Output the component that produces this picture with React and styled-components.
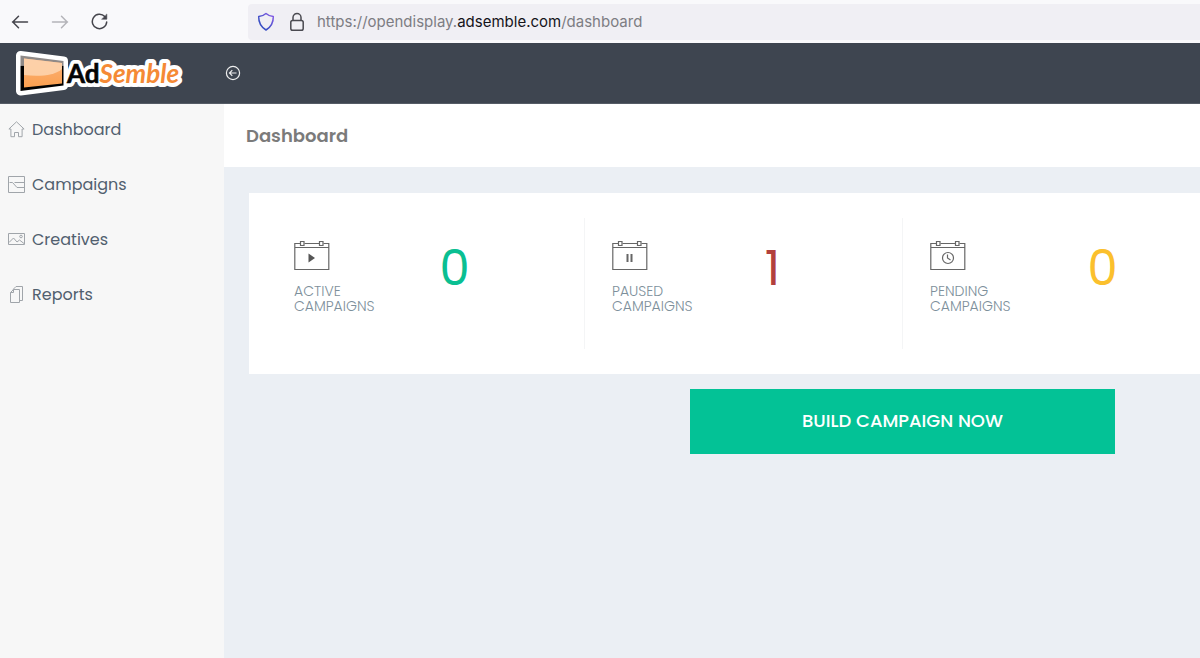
import styled, { createGlobalStyle } from "styled-components";

const navItems = [
    { name: "Dashboard", icon: <HomeIcon /> },
    { name: "Campaigns", icon: <CampaignIcon /> },
    { name: "Creatives", icon: <PictureIcon /> },
    { name: "Reports", icon: <PagesIcon /> },
]

const stats = [
    { status: "Active", count: 0, color: "#0abf92", mark: <path d="M14.5 13.5v9l6.5-4.5z" fill="#555" stroke="none" /> },
    { status: "Paused", count: 1, color: "#b2403d", mark: <path d="M15.5 14v8M19.5 14v8" strokeWidth="2" /> },
    {
        status: "Pending",
        count: 0,
        color: "#fbc02d",
        wide: true,
        mark: (
            <>
                <circle cx="18" cy="18" r="5.5" />
                <path d="M17.5 14.5V18l3 2" />
            </>
        ),
    },
]

const App = () => {
    return (
        <Page>
            <GlobalStyle />
            <Browser />
            <Header>
                <LogoLink href="/" aria-label="AdSemble">
                    <Logo />
                </LogoLink>
                <CollapseButton aria-label="Collapse menu">
                    <svg width="16" height="16" viewBox="0 0 16 16" fill="none" stroke="currentColor" strokeWidth="1.2">
                        <circle cx="8" cy="8" r="6.6" />
                        <path d="M11.5 8h-7M7.3 5.2L4.5 8l2.8 2.8" />
                    </svg>
                </CollapseButton>
            </Header>
            <Body>
                <Sidebar>
                    {navItems.map((item) => (
                        <NavLink href={"/" + item.name.toLowerCase()} key={item.name}>
                            {item.icon}
                            {item.name}
                        </NavLink>
                    ))}
                </Sidebar>
                <Main>
                    <TitleBar>
                        <Title>Dashboard</Title>
                    </TitleBar>
                    <Content>
                        <Card>
                            <StatGrid>
                                {stats.map((stat) => (
                                    <Stat key={stat.status} {...stat} />
                                ))}
                            </StatGrid>
                        </Card>
                        <Actions>
                            <BuildButton>BUILD CAMPAIGN NOW</BuildButton>
                        </Actions>
                    </Content>
                </Main>
            </Body>
        </Page>
    )
}

export default App

function Browser() {
    return (
        <Toolbar>
            <ToolButton aria-label="Back">
                <svg width="18" height="18" viewBox="0 0 18 18" fill="none" stroke="currentColor" strokeWidth="1.5" strokeLinecap="round" strokeLinejoin="round">
                    <path d="M16.5 9h-15M7.5 3.3L1.8 9l5.7 5.7" />
                </svg>
            </ToolButton>
            <ToolButton aria-label="Forward" disabled>
                <svg width="18" height="18" viewBox="0 0 18 18" fill="none" stroke="currentColor" strokeWidth="1.5" strokeLinecap="round" strokeLinejoin="round">
                    <path d="M1.5 9h15M10.5 3.3L16.2 9l-5.7 5.7" />
                </svg>
            </ToolButton>
            <ToolButton aria-label="Reload">
                <svg width="18" height="18" viewBox="0 0 18 18" fill="none" stroke="currentColor" strokeWidth="1.5" strokeLinecap="round">
                    <path d="M13.8 3.6A7.2 7.2 0 1 0 15.7 9" />
                    <path d="M15.8 1.4v4.8H11z" fill="currentColor" strokeWidth="0.6" strokeLinejoin="round" />
                </svg>
            </ToolButton>
            <AddressBar>
                <svg width="18" height="20" viewBox="0 0 18 20" fill="none" strokeWidth="1.5" strokeLinejoin="round">
                    <defs>
                        <linearGradient id="shield" x1="0" y1="1" x2="1" y2="0">
                            <stop offset="0.3" stopColor="#3a4fc4" />
                            <stop offset="1" stopColor="#8b5be8" />
                        </linearGradient>
                    </defs>
                    <path d="M9 1.5c2 1.8 4.3 2.7 7.3 2.9C16.5 10.5 14.5 14.5 9 18 3.5 14.5 1.5 10.5 1.7 4.4 4.7 4.2 7 3.3 9 1.5z" stroke="url(#shield)" />
                </svg>
                <svg width="16" height="20" viewBox="0 0 16 20" fill="none" stroke="#4a4a50" strokeWidth="1.5">
                    <rect x="1.8" y="8.5" width="12.4" height="9.7" rx="1.8" />
                    <path d="M4 8.5V5.5a4 4 0 0 1 8 0v3" />
                </svg>
                <Url role="textbox" aria-label="Address" contentEditable suppressContentEditableWarning spellCheck={false}>
                    https://opendisplay.<b>adsemble.com</b>/dashboard
                </Url>
            </AddressBar>
        </Toolbar>
    )
}

function Stat({ status, count, color, mark, wide }) {
    return (
        <StatCell $wide={wide}>
            <div>
                <svg width="36" height="32" viewBox="0 0 36 32" fill="none" stroke="#666" strokeWidth="1.2">
                    <path d="M6.5 3.5H.8v26h34v-26h-5.3M10.5 3.5h15M1 7.5h34" />
                    <path d="M6.5 1.5h3.5v4H6.5zM25.5 1.5h3.5v4h-3.5z" />
                    {mark}
                </svg>
                <StatLabel>{status} Campaigns</StatLabel>
            </div>
            <Count $color={color}>{count}</Count>
        </StatCell>
    )
}

function Logo() {
    const screen = "M20.5 8.500L63.500 14v24.500L20.500 44z"
    return (
        <svg width="184" height="52" viewBox="0 0 184 52">
            <defs>
                <linearGradient id="frame" x1="0" y1="0" x2="0" y2="1">
                    <stop offset="0.28" stopColor="#8f8a88" />
                    <stop offset="0.3" stopColor="#000" />
                </linearGradient>
                <linearGradient id="glass" x1="0" y1="0" x2="0" y2="1">
                    <stop offset="0" stopColor="#fbb27a" />
                    <stop offset="1" stopColor="#fba04f" />
                </linearGradient>
            </defs>
            <path d={screen} fill="#fff" stroke="#fff" strokeWidth="9" strokeLinejoin="round" />
            <LogoText x="67" y="36" fill="#fff" stroke="#fff" strokeWidth="8" strokeLinejoin="round">
                Ad<tspan fontStyle="italic">Semble</tspan>
            </LogoText>
            <path d={screen} fill="url(#frame)" />
            <path d="M24 11.5L62 16v20.500L24 40.500z" fill="url(#glass)" />
            <path d="M24 11.5L62 16v6c-7 6.500-23 8-38 6z" fill="#fdd6b2" opacity="0.85" />
            <LogoText x="67" y="36" fill="#050505">
                <tspan stroke="#050505" strokeWidth="0.6">Ad</tspan>
                <tspan fill="#f58a35" fontStyle="italic">Semble</tspan>
            </LogoText>
        </svg>
    )
}

function HomeIcon() {
    return (
        <NavIcon viewBox="0 0 17 17">
            <path d="M2.900 8H.9l7.600-7.200L16.100 8h-2v7.700h-3.600v-4.200h-4v4.200H2.900z" />
        </NavIcon>
    )
}

function CampaignIcon() {
    return (
        <NavIcon viewBox="0 0 17 17">
            <path d="M.5.5h16v16H.5zM1.500 6.500h3l4.500 5h7M6.500 6.500h9.500" />
        </NavIcon>
    )
}

function PictureIcon() {
    return (
        <NavIcon viewBox="0 0 17 17">
            <path d="M.5 2.500h16v11H.5zM1 11.500l4.500-4.500 3.500 4 2.500-2 4.500 3.500" />
            <circle cx="13" cy="5.5" r="1.3" />
        </NavIcon>
    )
}

function PagesIcon() {
    return (
        <NavIcon viewBox="0 0 17 17">
            <path d="M5.500 3.500h6v13h-9v-10zM5.500 3.500v3h-3M5 3.500l3-3h6.500v14H12" />
        </NavIcon>
    )
}

const GlobalStyle = createGlobalStyle`
  * {
    box-sizing: border-box;
  }
  body {
    margin: 0;
    font-family: Poppins, Inter, sans-serif;
  }
  svg {
    display: block;
    flex-shrink: 0;
  }
  button {
    border: 0;
    padding: 0;
    background: none;
    font-family: inherit;
    cursor: pointer;
  }
`;

const Page = styled.div`
  display: flex;
  flex-direction: column;
  min-height: 100vh;
  overflow: hidden;
`;

const Toolbar = styled.div`
  display: flex;
  align-items: center;
  gap: 22px;
  height: 43px;
  padding-left: 11px;
  background: #f9f9fb;
`;

const ToolButton = styled.button`
  color: #45454c;
  &:disabled {
    color: #b4b4b9;
  }
`;

const AddressBar = styled.div`
  display: flex;
  flex: 1;
  align-items: center;
  gap: 14px;
  height: 36px;
  margin-left: 117px;
  padding-left: 9px;
  border-radius: 4px 0 0 4px;
  background: #f0eff4;
`;

const Url = styled.div`
  flex: 1;
  margin-left: -2px;
  font-family: Inter, sans-serif;
  font-size: 15px;
  color: #7d7d83;
  outline: none;
  b {
    font-weight: 400;
    color: #15141a;
  }
`;

const Header = styled.header`
  display: flex;
  align-items: center;
  gap: 41px;
  height: 61px;
  background: #3e4550;
  border-bottom: 1px solid #555c66;
`;

const LogoLink = styled.a`
  text-decoration: none;
`;

const LogoText = styled.text`
  font-family: Lato, sans-serif;
  font-size: 26px;
  font-weight: 700;
`;

const CollapseButton = styled.button`
  color: #eee;
`;

const Body = styled.div`
  display: flex;
  flex: 1;
`;

const Sidebar = styled.nav`
  display: flex;
  flex-direction: column;
  gap: 31px;
  width: 224px;
  padding: 14px 8px;
  background: #f7f7f7;
`;

const NavLink = styled.a`
  display: flex;
  align-items: flex-start;
  gap: 7px;
  font-size: 16px;
  line-height: 24px;
  color: #51606f;
  text-decoration: none;
`;

const NavIcon = styled.svg`
  width: 17px;
  height: 17px;
  margin-top: 3px;
  fill: none;
  stroke: #a0a5aa;
`;

const Main = styled.main`
  display: flex;
  flex-direction: column;
  flex: 1;
  min-width: 0;
`;

const TitleBar = styled.div`
  padding: 18px 22px;
  background: #fff;
`;

const Title = styled.h1`
  margin: 0;
  font-size: 18px;
  font-weight: 600;
  line-height: 27px;
  color: #7b7b7b;
`;

const Content = styled.div`
  flex: 1;
  padding: 26px 0 26px 25px;
  background: #ebeff4;
`;

const Card = styled.section`
  padding: 25px 0 25px 18px;
  background: #fff;
  overflow: hidden;
`;

/* the row runs on under the right edge of the card */
const StatGrid = styled.div`
  display: grid;
  grid-template-columns: repeat(3, 1fr);
  margin-right: -21px;
`;

const StatCell = styled.div`
  display: grid;
  grid-template-columns: min-content 32px;
  align-items: start;
  gap: ${(props) => (props.$wide ? "76px" : "64px")};
  min-height: 131px;
  padding: 22px 27px;
  border-right: 1px solid #f4f5f6;
`;

const StatLabel = styled.div`
  margin-top: 12px;
  font-size: 14px;
  font-weight: 300;
  line-height: 15px;
  text-transform: uppercase;
  color: #7d8f9b;
`;

const Count = styled.div`
  font-size: 48px;
  font-weight: 400;
  line-height: 58px;
  text-align: center;
  color: ${(props) => props.$color};
`;

const Actions = styled.div`
  display: flex;
  justify-content: flex-end;
  margin-top: 15px;
  padding-right: 85px;
`;

const BuildButton = styled.button`
  width: 425px;
  height: 65px;
  padding-bottom: 2px;
  background: #03c296;
  color: #fff;
  font-size: 18px;
  font-weight: 500;
`;
